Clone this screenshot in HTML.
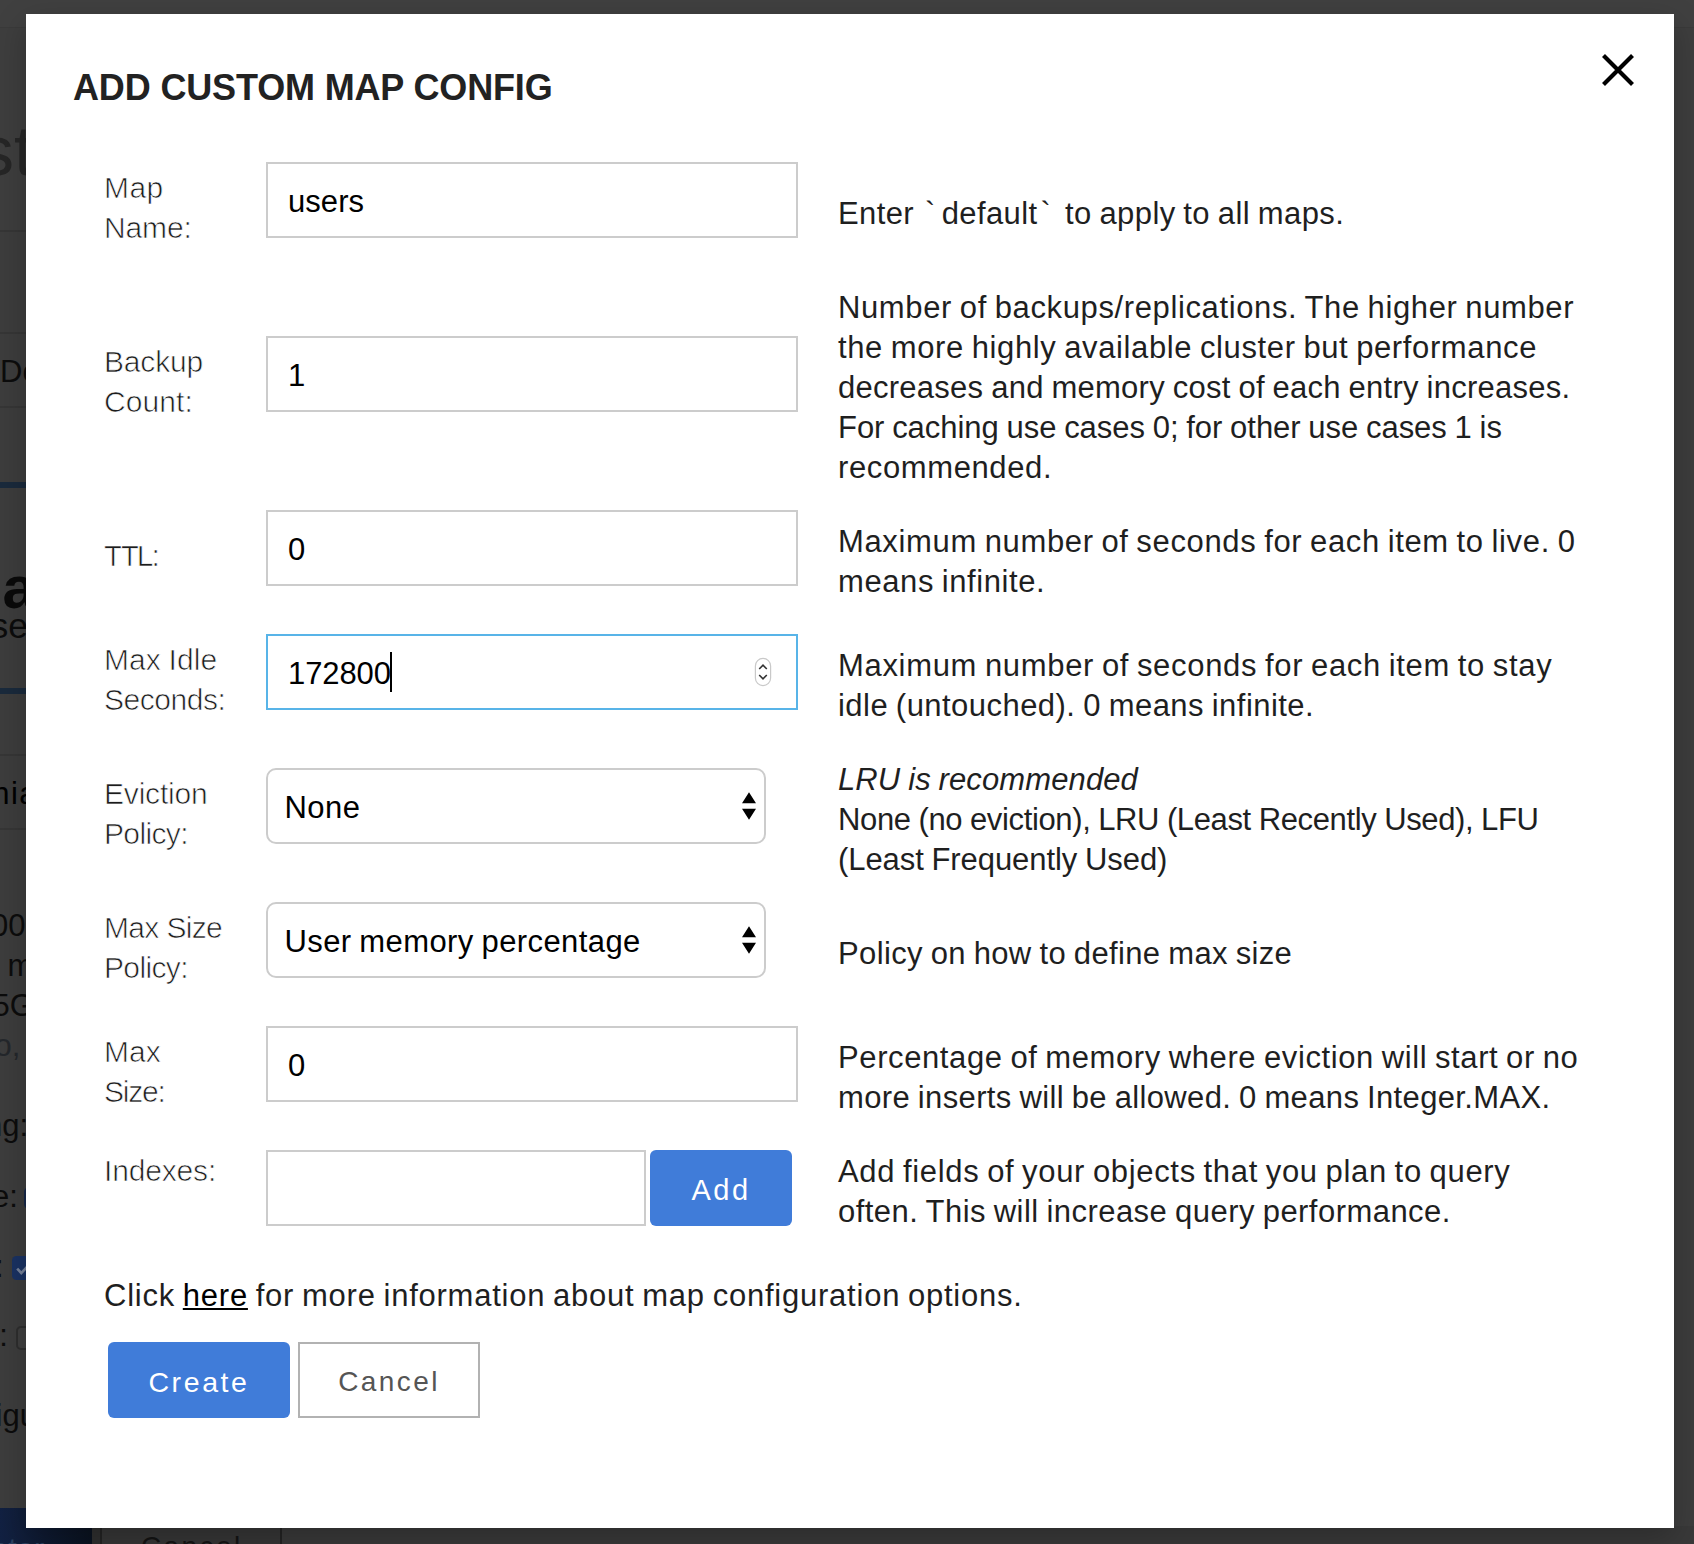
<!DOCTYPE html>
<html lang="en"><head><meta charset="utf-8"><title>Add Custom Map Config</title>
<style>
*{box-sizing:border-box;margin:0;padding:0}
html,body{width:1694px;height:1544px;overflow:hidden}
body{position:relative;background:#3d3d3d;font-family:"Liberation Sans", sans-serif;color:#222;-webkit-font-smoothing:antialiased}
.abs,.t,.box,.sel,.btn{position:absolute}
.hdr{position:absolute;left:0;top:0;width:1694px;height:230px;background:#3e3e3e}
.topbar{position:absolute;left:0;top:0;width:1694px;height:28px;background:#404040;border-bottom:1px solid #3a3a3a}
.modal{position:absolute;left:26px;top:14px;width:1648px;height:1514px;background:#fff;box-shadow:0 10px 30px rgba(0,0,0,.24)}
.bg{position:absolute;left:0;top:0;width:1694px;height:1544px;overflow:hidden}
.ln{position:absolute;left:0;width:26px;height:2px;background:#363636}
.ln.navy{height:6px;background:#1a2a3c}
.g{position:absolute;white-space:nowrap;font-size:31px;line-height:40px;color:#0c0c0c}
.t{white-space:nowrap;line-height:40px;height:40px}
.lab{font-size:30px;color:#1c1c1c;font-weight:400;-webkit-text-stroke:0.7px #fff}
.hint{font-size:31px;color:#1f1f1f}
.hint em{font-style:italic}
.bt{padding:0 6px 0 3px}
.hint a{color:#000;text-decoration:underline;text-decoration-thickness:2px;text-underline-offset:2px}
.val{font-size:31px;color:#000}
.title{position:absolute;left:74px;top:61px;font-size:36px;line-height:52px;font-weight:700;color:#222;white-space:nowrap}
.box{border:2px solid #ccc;background:#fff;height:76px}
.box.focus{border-color:#58b4e8}
.sel{border:2px solid #ccc;border-radius:10px;background:#fff;height:76px;width:500px;left:240px}
.caret{width:2px;height:40px;background:#000}
.btn{font-family:inherit;border:0;padding:0;display:block;height:76px;border-radius:6px;font-size:28px;letter-spacing:2px;text-align:center;line-height:78px;white-space:nowrap}
.btn.primary{background:#407cd9;color:#fff;font-weight:400}
.btn.plain{background:#fff;border:2px solid #b2b2b2;color:#555;border-radius:0;line-height:74px}
</style></head><body>
<div class="hdr"></div>
<div class="topbar"></div>
<div class="bg">
<div class="ln" style="top:230px"></div>
<div class="ln" style="top:332px"></div>
<div class="ln" style="top:406px"></div>
<div class="ln" style="top:754px"></div>
<div class="ln" style="top:828px"></div>
<div class="ln navy" style="top:482px"></div>
<div class="ln navy" style="top:688px"></div>
<div class="g" style="left:-21px;top:131.1px;font-size:70px;color:#262626">st</div>
<div class="g" style="left:0px;top:352.4px">Do</div>
<div class="g" style="left:2.5px;top:568.3px;font-size:60px;color:#0a0a0a;font-weight:700">a</div>
<div class="g" style="left:-9.5px;top:605.8px;font-size:35.5px">se</div>
<div class="g" style="left:-7.8px;top:773.9px;color:#000;letter-spacing:1.5px">nia</div>
<div class="g" style="left:-8.9px;top:906.1px">00</div>
<div class="g" style="left:7.6px;top:945.6px">m</div>
<div class="g" style="left:-7.4px;top:986.2px">5G</div>
<div class="g" style="left:-5.5px;top:1026.4px;color:#24272b">o,</div>
<div class="g" style="left:-14.9px;top:1106.2px">ng:</div>
<div class="g" style="left:-8.1px;top:1176.7px">e:</div>
<div class="g" style="left:-5px;top:1246.6px">:</div>
<div class="g" style="left:-9.4px;top:1316.0px">t:</div>
<div class="g" style="left:-4.4px;top:1395.6px">igu</div>
<div class="abs" style="left:24px;top:1187px;width:20px;height:22px;border-radius:5px;background:#16284a"></div>
<svg class="abs" style="left:12px;top:1256px" width="26" height="24" viewBox="0 0 26 24"><rect width="26" height="24" rx="4.5" fill="#1a3263"/><path d="M5.2 12.6 L9.3 17 L15 11" fill="none" stroke="#76829a" stroke-width="2.6"/></svg>
<div class="abs" style="left:16px;top:1326px;width:26px;height:24px;border-radius:5px;border:2px solid #2e2e2e;background:#3f3f3f"></div>
<div class="abs" style="left:0;top:1526px;width:1694px;height:18px;background:#393939"></div>
<div class="abs" style="left:0;top:1508px;width:92px;height:36px;background:linear-gradient(90deg,#122142,#0a121f)"></div>
<div class="g" style="left:-9px;top:1529.9px;color:#2c4160">ator</div>
<div class="abs" style="left:92px;top:1520px;width:9px;height:24px;background:#2f2f2f"></div>
<div class="abs" style="left:100px;top:1500px;width:182px;height:76px;border:2px solid #232323;background:#363636"></div>
<div class="g" style="left:141px;top:1527.4px;font-size:28px;letter-spacing:2.4px;color:#141414">Cancel</div>
</div>

<div class="modal" role="dialog" aria-labelledby="dlgtitle">
<h2 class="title" id="dlgtitle" style="letter-spacing:-0.15px;left:47px;top:48px">ADD CUSTOM MAP CONFIG</h2>
<svg class="abs close" style="left:1572px;top:36px" width="40" height="40" viewBox="0 0 40 40"><path d="M5.5 5.5 L34.5 34.5 M34.5 5.5 L5.5 34.5" stroke="#000" stroke-width="4.2" fill="none"/></svg>
<form>
<div class="row">
<label><span class="t lab" id="lab0" style="left:78px;top:154.4px;letter-spacing:0.432px">Map</span>
<span class="t lab" id="lab1" style="left:78px;top:194.4px;letter-spacing:-0.141px">Name:</span></label>
<div class="box" style="left:240px;top:148px;width:532px"></div><span class="t val" id="val0" style="left:262px;top:167.9px;letter-spacing:0.059px">users</span>
<p><span class="t hint" id="hint0" style="left:812px;top:180.4px;letter-spacing:0.398px;word-spacing:-1.218px">Enter <span class="bt">`</span>default<span class="bt">`</span> to apply to all maps.</span></p>
</div>
<div class="row">
<label><span class="t lab" id="lab2" style="left:78px;top:328.4px;letter-spacing:-0.172px">Backup</span>
<span class="t lab" id="lab3" style="left:78px;top:368.4px;letter-spacing:0.073px">Count:</span></label>
<div class="box" style="left:240px;top:322px;width:532px"></div><span class="t val" id="val1" style="left:262px;top:341.9px;letter-spacing:-0.094px">1</span>
<p><span class="t hint" id="hint1" style="left:812px;top:274.4px;letter-spacing:0.623px;word-spacing:-1.442px">Number of backups/replications. The higher number</span>
<span class="t hint" id="hint2" style="left:812px;top:314.4px;letter-spacing:0.622px;word-spacing:-1.441px">the more highly available cluster but performance</span>
<span class="t hint" id="hint3" style="left:812px;top:354.4px;letter-spacing:0.258px;word-spacing:-1.077px">decreases and memory cost of each entry increases.</span>
<span class="t hint" id="hint4" style="left:812px;top:394.4px;letter-spacing:-0.043px;word-spacing:-0.777px">For caching use cases 0; for other use cases 1 is</span>
<span class="t hint" id="hint5" style="left:812px;top:434.4px;letter-spacing:0.616px">recommended.</span></p>
</div>
<div class="row">
<label><span class="t lab" id="lab4" style="left:78px;top:522.4px;letter-spacing:-1.918px">TTL:</span></label>
<div class="box" style="left:240px;top:496px;width:532px"></div><span class="t val" id="val2" style="left:262px;top:515.9px;letter-spacing:-0.094px">0</span>
<p><span class="t hint" id="hint6" style="left:812px;top:508.4px;letter-spacing:0.646px;word-spacing:-1.466px">Maximum number of seconds for each item to live. 0</span>
<span class="t hint" id="hint7" style="left:812px;top:548.4px;letter-spacing:0.583px;word-spacing:-1.402px">means infinite.</span></p>
</div>
<div class="row">
<label><span class="t lab" id="lab5" style="left:78px;top:626.4px;letter-spacing:0.051px;word-spacing:-0.592px">Max Idle</span>
<span class="t lab" id="lab6" style="left:78px;top:666.4px;letter-spacing:-0.463px">Seconds:</span></label>
<div class="box focus" style="left:240px;top:620px;width:532px"><svg class="abs" style="left:486px;top:21px" width="18" height="30" viewBox="0 0 18 30"><rect x="1.4" y="1.4" width="15.2" height="27.2" rx="7.6" ry="7.6" fill="#fff" stroke="#c9c9c9" stroke-width="1.2"/><path d="M5.2 12 L9 8.2 L12.8 12 M5.2 18 L9 21.8 L12.8 18" fill="none" stroke="#333" stroke-width="1.6"/></svg><i class="abs caret" style="left:122px;top:16px"></i></div><span class="t val" id="val3" style="left:262px;top:639.9px;letter-spacing:-0.089px">172800</span>
<p><span class="t hint" id="hint8" style="left:812px;top:632.4px;letter-spacing:0.683px;word-spacing:-1.503px">Maximum number of seconds for each item to stay</span>
<span class="t hint" id="hint9" style="left:812px;top:672.4px;letter-spacing:0.455px;word-spacing:-1.275px">idle (untouched). 0 means infinite.</span></p>
</div>
<div class="row">
<label><span class="t lab" id="lab7" style="left:78px;top:760.4px;letter-spacing:-0.191px">Eviction</span>
<span class="t lab" id="lab8" style="left:78px;top:800.4px;letter-spacing:-0.638px">Policy:</span></label>
<div class="sel" style="top:754px"><svg class="abs arrows" width="18" height="32" viewBox="0 0 18 32" style="left:472px;top:20px"><path d="M9 2.3 L16 13.3 L2 13.3 Z M9 29.7 L16 18.7 L2 18.7 Z" fill="#000"/></svg></div><span class="t val" id="sel0" style="left:258.5px;top:773.9px;letter-spacing:0.445px">None</span>
<p><span class="t hint" id="hint10" style="left:812px;top:746.4px;letter-spacing:0.114px;word-spacing:-0.933px"><em>LRU is recommended</em></span>
<span class="t hint" id="hint11" style="left:812px;top:786.4px;letter-spacing:-0.363px;word-spacing:-0.456px">None (no eviction), LRU (Least Recently Used), LFU</span>
<span class="t hint" id="hint12" style="left:812px;top:826.4px;letter-spacing:-0.074px;word-spacing:-0.746px">(Least Frequently Used)</span></p>
</div>
<div class="row">
<label><span class="t lab" id="lab9" style="left:78px;top:894.4px;letter-spacing:-0.693px;word-spacing:0.151px">Max Size</span>
<span class="t lab" id="lab10" style="left:78px;top:934.4px;letter-spacing:-0.638px">Policy:</span></label>
<div class="sel" style="top:888px"><svg class="abs arrows" width="18" height="32" viewBox="0 0 18 32" style="left:472px;top:20px"><path d="M9 2.3 L16 13.3 L2 13.3 Z M9 29.7 L16 18.7 L2 18.7 Z" fill="#000"/></svg></div><span class="t val" id="sel1" style="left:258.5px;top:907.9px;letter-spacing:0.403px;word-spacing:-1.223px">User memory percentage</span>
<p><span class="t hint" id="hint13" style="left:812px;top:920.4px;letter-spacing:0.362px;word-spacing:-1.181px">Policy on how to define max size</span></p>
</div>
<div class="row">
<label><span class="t lab" id="lab11" style="left:78px;top:1018.4px;letter-spacing:0.01px">Max</span>
<span class="t lab" id="lab12" style="left:78px;top:1058.4px;letter-spacing:-1.216px">Size:</span></label>
<div class="box" style="left:240px;top:1012px;width:532px"></div><span class="t val" id="val4" style="left:262px;top:1031.9px;letter-spacing:-0.094px">0</span>
<p><span class="t hint" id="hint14" style="left:812px;top:1024.4px;letter-spacing:0.608px;word-spacing:-1.427px">Percentage of memory where eviction will start or no</span>
<span class="t hint" id="hint15" style="left:812px;top:1064.4px;letter-spacing:0.355px;word-spacing:-1.175px">more inserts will be allowed. 0 means Integer.MAX.</span></p>
</div>
<div class="row">
<label><span class="t lab" id="lab13" style="left:78px;top:1137.4px;letter-spacing:-0.16px">Indexes:</span></label>
<div class="box" style="left:240px;top:1136px;width:380px"></div><button type="button" class="btn primary" id="badd" style="left:624px;top:1136px;width:142px;font-size:29px;letter-spacing:2.5px;line-height:80px">Add</button>
<p><span class="t hint" id="hint16" style="left:812px;top:1138.4px;letter-spacing:0.669px;word-spacing:-1.489px">Add fields of your objects that you plan to query</span>
<span class="t hint" id="hint17" style="left:812px;top:1178.4px;letter-spacing:0.459px;word-spacing:-1.279px">often. This will increase query performance.</span></p>
</div>
<p><span class="t hint" id="click" style="left:78px;top:1262.4px;letter-spacing:0.767px;word-spacing:-1.586px">Click <a>here</a> for more information about map configuration options.</span></p>
<div class="actions"><button type="button" class="btn primary" id="bcreate" style="left:82px;top:1328px;width:182px;font-size:28.5px;letter-spacing:2.6px;line-height:80px">Create</button><button type="button" class="btn plain" id="bcancel" style="left:272px;top:1328px;width:182px;font-size:28px;letter-spacing:2.4px;line-height:76px">Cancel</button></div>
</form>
</div>
</body></html>
